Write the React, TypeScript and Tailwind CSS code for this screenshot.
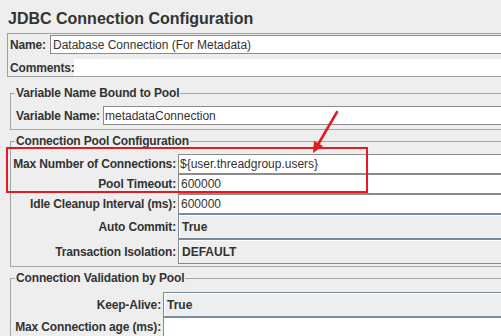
import React from "react";

const labelCls = "font-bold text-[12px] tracking-[-0.15px] whitespace-nowrap";
const fieldCls = "bg-white border border-[#8c8c8c] text-[12px] flex items-center whitespace-nowrap overflow-hidden";
const comboCls = "bg-[#eeeeee] border border-[#7a8a99] shadow-[inset_1px_1px_0_#ffffff] text-[12px] font-bold flex items-center whitespace-nowrap";

function Row({ label, labelW, h, children }: { label: string; labelW: string; h: string; children: React.ReactNode }) {
  return (
    <div className={`flex items-stretch ${h}`}>
      <div className={`${labelW} ${labelCls} flex items-center justify-end`}>{label}</div>
      <div className="ml-[2px] flex-1 flex">{children}</div>
    </div>
  );
}

export default function App() {
  return (
    <div className="relative w-[501px] h-[336px] overflow-hidden bg-[#eeeeee] text-[#333333] font-['Liberation_Sans',Arial,sans-serif]">
      <div className="pl-[8px] pt-[9px] text-[16px] leading-[19px] font-bold whitespace-nowrap">JDBC Connection Configuration</div>

      {/* Name / Comments panel */}
      <div className="mt-[5px] ml-[7px] w-[540px] border border-[#a0a0a0]">
        <div className="pt-[1px] flex items-center h-[20px]">
          <div className={`pl-[2px] w-[42px] ${labelCls}`}>Name:</div>
          <div className={`flex-1 h-[19px] pl-[2px] ${fieldCls}`}>Database Connection (For Metadata)</div>
        </div>
        <div className="mt-[5px] flex items-center h-[17px]">
          <div className={`pl-[2px] w-[66px] ${labelCls}`}>Comments:</div>
          <div className="flex-1 h-[17px] bg-white"></div>
        </div>
      </div>

      {/* Variable Name Bound to Pool */}
      <fieldset className="mt-[9px] ml-[10px] w-[540px] border border-[#a5a5a5] pb-[4px]">
        <legend className="ml-[4px] px-[1px] text-[12px] leading-[14px] font-bold tracking-[-0.15px]">Variable Name Bound to Pool</legend>
        <div className="flex items-center pt-[6px] pl-[5px]">
          <div className={`w-[87px] ${labelCls}`}>Variable Name:</div>
          <div className={`flex-1 h-[19px] pl-[1px] ${fieldCls}`}>metadataConnection</div>
        </div>
      </fieldset>

      {/* Connection Pool Configuration */}
      <fieldset className="mt-[4px] ml-[10px] w-[540px] border border-[#a5a5a5] pb-[2px]">
        <legend className="ml-[4px] px-[1px] text-[12px] leading-[14px] font-bold tracking-[-0.15px]">Connection Pool Configuration</legend>
        <div className="pt-[6px] flex flex-col">
          <Row label="Max Number of Connections:" labelW="w-[165px]" h="h-[20px]">
            <div className={`flex-1 pl-[1px] ${fieldCls}`}>{"${user.threadgroup.users}"}</div>
          </Row>
          <Row label="Pool Timeout:" labelW="w-[165px]" h="h-[20px]">
            <div className={`flex-1 pl-[2px] ${fieldCls}`}>600000</div>
          </Row>
          <Row label="Idle Cleanup Interval (ms):" labelW="w-[165px]" h="h-[20px]">
            <div className={`flex-1 pl-[2px] ${fieldCls}`}>600000</div>
          </Row>
          <Row label="Auto Commit:" labelW="w-[165px]" h="h-[25px]">
            <div className={`flex-1 pl-[3px] ${comboCls}`}>True</div>
          </Row>
          <Row label="Transaction Isolation:" labelW="w-[165px]" h="h-[25px]">
            <div className={`flex-1 pl-[3px] ${comboCls}`}>DEFAULT</div>
          </Row>
        </div>
      </fieldset>

      {/* Connection Validation by Pool */}
      <fieldset className="mt-[4px] ml-[10px] w-[540px] border border-[#a5a5a5] pb-[3px]">
        <legend className="ml-[4px] px-[1px] text-[12px] leading-[14px] font-bold tracking-[-0.15px]">Connection Validation by Pool</legend>
        <div className="pt-[7px] flex flex-col">
          <Row label="Keep-Alive:" labelW="w-[150px]" h="h-[25px]">
            <div className={`flex-1 pl-[3px] ${comboCls}`}>True</div>
          </Row>
          <Row label="Max Connection age (ms):" labelW="w-[150px]" h="h-[20px]">
            <div className={`flex-1 pl-[2px] ${fieldCls}`}></div>
          </Row>
        </div>
      </fieldset>

      {/* Red highlight rectangle (overlay) */}
      <div className="absolute left-[6px] top-[147px] w-[362px] h-[46px] border-[2px] border-[#e01b24] pointer-events-none"></div>

      {/* Red arrow (overlay) */}
      <svg className="absolute left-0 top-0 pointer-events-none" width="501" height="336" viewBox="0 0 501 336">
        <line x1="337" y1="112" x2="318.6" y2="143.5" stroke="#e01b24" strokeWidth="2.5" strokeLinecap="round" />
        <polygon points="313,153 323,146 314,141" fill="#e01b24" />
      </svg>
    </div>
  );
}
